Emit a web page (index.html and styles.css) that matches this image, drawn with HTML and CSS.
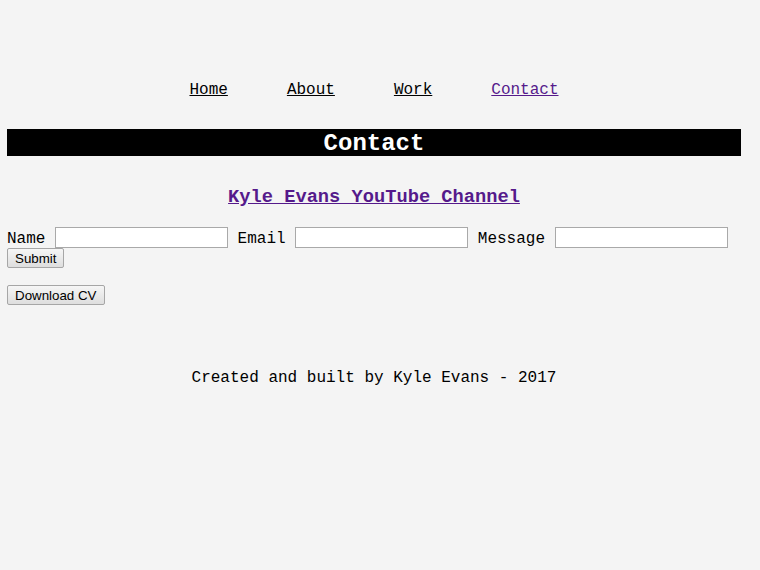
FILE: index.html
```html
<!DOCTYPE html>
<html>
<head>
<meta charset="utf-8">
<link rel="stylesheet" href="styles.css">
</head>
<body>
<nav class="nav">
  <a class="nav-link" href="#">Home</a>
  <a class="nav-link" href="#">About</a>
  <a class="nav-link" href="#">Work</a>
  <a class="nav-link visited" href="#">Contact</a>
</nav>
<h2 class="banner">Contact</h2>
<h3 class="channel"><a class="channel-link" href="#">Kyle Evans YouTube Channel</a></h3>
<form class="contact-form">
  <label class="field-label">Name</label>
  <input class="field" type="text">
  <label class="field-label">Email</label>
  <input class="field" type="text">
  <label class="field-label">Message</label>
  <input class="field" type="text">
  <button class="btn" type="button">Submit</button>
</form>
<div class="cv"><button class="btn" type="button">Download CV</button></div>
<footer class="footer">Created and built by Kyle Evans - 2017</footer>
</body>
</html>
```
FILE: styles.css
```css
html { background: #f4f4f4; }
body {
  margin: 0 19px 0 7px;
  font-family: "Liberation Mono", "Courier New", monospace;
  font-size: 16px;
  color: #000;
}
.nav {
  display: flex;
  justify-content: center;
  gap: 59px;
  padding-top: 81px;
  line-height: 18px;
}
.nav-link { color: #000; text-decoration: underline; }
.nav-link.visited { color: #551a8b; }
.banner {
  margin: 30px 0 0;
  background: #000;
  color: #fff;
  text-align: center;
  font-size: 24px;
  font-weight: bold;
  line-height: 27px;
  padding-top: 1px;
  height: 26px;
}
.channel {
  margin: 31px 0 0;
  text-align: center;
  font-size: 18.72px;
  font-weight: bold;
  line-height: 21px;
}
.channel-link { color: #551a8b; }
.contact-form {
  display: flex;
  flex-wrap: wrap;
  align-items: flex-start;
  margin-top: 19px;
}
.field-label {
  box-sizing: border-box;
  height: 21px;
  padding-top: 3px;
  line-height: 18px;
  margin-right: 9.6px;
}
.field {
  box-sizing: border-box;
  width: 173px;
  height: 21px;
  margin: 0 9.6px 0 0;
  border: 1px solid #a9a9a9;
  background: #fff;
  padding: 1px 2px;
}
.btn {
  font-family: "Liberation Sans", Arial, sans-serif;
  font-size: 13.33px;
  color: #000;
  height: 20px;
  padding: 0 7px;
  border: 1px solid #a6a6a6;
  border-radius: 2px;
  background: linear-gradient(#f6f6f6, #dedede);
}
.cv { margin-top: 17px; }
.footer {
  margin-top: 64px;
  text-align: center;
  line-height: 18px;
}
```
